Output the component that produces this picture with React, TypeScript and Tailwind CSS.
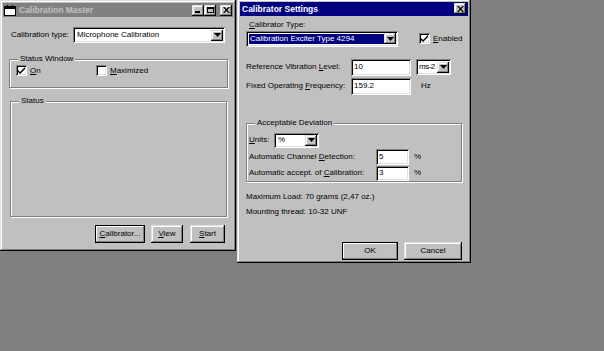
import React from 'react'

const raised =
  'bg-[#c0c0c0] shadow-[inset_-1px_-1px_#000,inset_1px_1px_#dfdfdf,inset_-2px_-2px_#808080,inset_2px_2px_#fff]'
const sunken =
  'bg-white shadow-[inset_1px_1px_#808080,inset_-1px_-1px_#fff,inset_2px_2px_#000,inset_-2px_-2px_#dfdfdf]'

function U({ children }: { children: React.ReactNode }) {
  return <span className="underline underline-offset-[1px]">{children}</span>
}

function Arrow() {
  return (
    <div className={`${raised} w-[12px] h-[11px] flex items-center justify-center shrink-0`}>
      <svg width="7" height="4" viewBox="0 0 7 4">
        <path d="M0 0h7L3.5 4z" fill="#000" />
      </svg>
    </div>
  )
}

function Select({
  value,
  width,
  height = 16,
  selected = false,
  tight = false,
}: {
  value: string
  width: number
  height?: number
  selected?: boolean
  tight?: boolean
}) {
  return (
    <div className={`${sunken} flex items-center p-[2px] shrink-0`} style={{ width, height }}>
      <div className="flex-1 min-w-0 h-full flex items-center pl-[1px] overflow-hidden whitespace-nowrap">
        <span
          className={
            selected
              ? 'bg-[#000080] text-white px-[1px] w-full leading-[10px]'
              : tight
                ? 'tracking-[-0.5px] leading-[10px]'
                : 'px-[1px] leading-[10px]'
          }
        >
          {value}
        </span>
      </div>
      <Arrow />
    </div>
  )
}

function Input({ value, width, height = 17 }: { value: string; width: number; height?: number }) {
  return (
    <div className={`${sunken} flex items-center pl-[3px] shrink-0`} style={{ width, height }}>
      {value}
    </div>
  )
}

function Check({ checked }: { checked: boolean }) {
  return (
    <div className={`${sunken} w-[11px] h-[11px] flex items-center justify-center shrink-0`}>
      {checked && (
        <svg width="7" height="7" viewBox="0 0 7 7">
          <path d="M0 3l2 2 5-5v2L2 7 0 5z" fill="#000" />
        </svg>
      )}
    </div>
  )
}

function Button({ children, width, isDefault = false }: { children: React.ReactNode; width: number; isDefault?: boolean }) {
  return (
    <div
      className={`${raised} h-[18px] flex items-center justify-center ${isDefault ? 'outline outline-1 outline-black -outline-offset-1' : ''}`}
      style={{ width }}
    >
      {children}
    </div>
  )
}

function Group({ label, className, children }: { label: string; className: string; children?: React.ReactNode }) {
  return (
    <div className={`relative border border-[#808080] shadow-[1px_1px_#fff,inset_1px_1px_#fff] ${className}`}>
      <span className="absolute -top-[6px] left-[8px] bg-[#c0c0c0] px-[2px] leading-[10px]">{label}</span>
      {children}
    </div>
  )
}

function TitleButton({ children }: { children: React.ReactNode }) {
  return <div className={`${raised} w-[12px] h-[11px] flex items-center justify-center`}>{children}</div>
}

const closeGlyph = (
  <svg width="7" height="6" viewBox="0 0 7 6">
    <path d="M0 0h1.5L3.5 2 5.5 0H7L4.3 3 7 6H5.5L3.5 4 1.5 6H0l2.7-3z" fill="#000" />
  </svg>
)

export default function App() {
  return (
    <div className="w-[604px] h-[351px] bg-[#808080] overflow-hidden flex items-start gap-[1px] text-[8px] leading-[10px] text-black font-['Liberation_Sans',Arial,sans-serif]">
      {/* Calibration Master */}
      <div className={`${raised} w-[236px] h-[251px] p-[3px] flex flex-col shrink-0`}>
        <div className="h-[14px] bg-[#808080] flex items-center pl-[1px] pr-[1px]">
          <svg width="12" height="11" viewBox="0 0 12 11" className="shrink-0">
            <rect x="0.5" y="1.5" width="11" height="9" fill="#fff" stroke="#000" />
            <rect x="1" y="2" width="10" height="2" fill="#000" />
            <rect x="3" y="0" width="1" height="3" fill="#000" />
            <rect x="8" y="0" width="1" height="3" fill="#000" />
          </svg>
          <span className="ml-[3px] font-bold text-[8.5px] text-[#c0c0c0]">Calibration Master</span>
          <div className="ml-auto flex">
            <TitleButton>
              <div className="w-[5px] h-[2px] bg-black mt-[4px] -ml-[1px]" />
            </TitleButton>
            <TitleButton>
              <div className="w-[7px] h-[6px] border border-black border-t-2" />
            </TitleButton>
            <div className="ml-[4px]">
              <TitleButton>{closeGlyph}</TitleButton>
            </div>
          </div>
        </div>

        <div className="mt-[10px] flex items-center pl-[8px]">
          <span className="w-[62px]">Calibration type:</span>
          <Select value="Microphone Calibration" width={152} />
        </div>

        <Group label="Status Window" className="mt-[16px] ml-[6px] w-[219px] h-[29px]">
          <div className="flex items-center pt-[5px] pl-[6px]">
            <div className="w-[80px] flex items-center">
              <Check checked />
              <span className="ml-[3px]">
                <U>O</U>n
              </span>
            </div>
            <Check checked={false} />
            <span className="ml-[3px]">
              <U>M</U>aximized
            </span>
          </div>
        </Group>

        <Group label="Status" className="mt-[13px] ml-[7px] w-[217px] h-[116px]" />

        <div className="mt-[8px] flex justify-end pr-[8px] gap-[6px]">
          <Button width={50} isDefault>
            <span>
              <U>C</U>alibrator...
            </span>
          </Button>
          <Button width={32}>
            <span>
              <U>V</U>iew
            </span>
          </Button>
          <div className="ml-[1px]">
            <Button width={35}>
              <span>
                <U>S</U>tart
              </span>
            </Button>
          </div>
        </div>
      </div>

      {/* Calibrator Settings */}
      <div className={`${raised} w-[234px] h-[264px] -mt-[1px] p-[3px] flex flex-col shrink-0`}>
        <div className="h-[14px] bg-[#000080] flex items-center pl-[2px] pr-[2px]">
          <span className="font-bold text-[8.5px] text-white">Calibrator Settings</span>
          <div className="ml-auto">
            <TitleButton>{closeGlyph}</TitleButton>
          </div>
        </div>

        <span className="mt-[4px] pl-[9px]">
          <U>C</U>alibrator Type:
        </span>

        <div className="mt-[1px] flex items-center pl-[6px]">
          <Select value="Calibration Exciter Type 4294" width={152} height={16} selected />
          <div className="ml-[21px]">
            <Check checked />
          </div>
          <span className="ml-[3px]">
            <U>E</U>nabled
          </span>
        </div>

        <div className="mt-[12px] flex items-center pl-[6px]">
          <span className="w-[105px]">
            Reference Vibration <U>L</U>evel:
          </span>
          <Input value="10" width={60} />
          <div className="ml-[5px]">
            <Select value="ms-2" width={35} tight />
          </div>
        </div>

        <div className="mt-[2px] flex items-center pl-[6px]">
          <span className="w-[105px]">
            Fixed Operating <U>F</U>requency:
          </span>
          <Input value="159.2" width={60} />
          <span className="ml-[10px]">Hz</span>
        </div>

        <Group label="Acceptable Deviation" className="mt-[28px] ml-[6px] w-[216px] h-[60px]">
          <div className="pt-[9px] pl-[2px] flex flex-col gap-[1px]">
            <div className="flex items-center">
              <span className="w-[25px]">
                <U>U</U>nits:
              </span>
              <Select value="%" width={45} height={15} />
            </div>
            <div className="flex items-center">
              <span className="w-[127px]">
                Automatic Channel <U>D</U>etection:
              </span>
              <Input value="5" width={33} height={16} />
              <span className="ml-[5px]">%</span>
            </div>
            <div className="flex items-center">
              <span className="w-[127px]">
                Automatic accept. of <U>C</U>alibration:
              </span>
              <Input value="3" width={33} height={15} />
              <span className="ml-[5px]">%</span>
            </div>
          </div>
        </Group>

        <span className="mt-[10px] pl-[6px]">Maximum Load: 70 grams (2,47 oz.)</span>
        <span className="mt-[5px] pl-[6px]">Mounting thread: 10-32 UNF</span>

        <div className="mt-[25px] flex justify-end pr-[6px] gap-[6px]">
          <Button width={56} isDefault>
            OK
          </Button>
          <Button width={58}>Cancel</Button>
        </div>
      </div>
    </div>
  )
}
